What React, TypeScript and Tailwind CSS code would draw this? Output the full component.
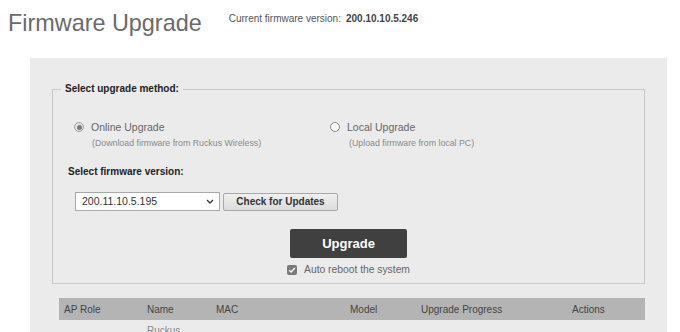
import React from 'react';

const columns = [
  { label: 'AP Role', w: 'w-[83px]' },
  { label: 'Name', w: 'w-[69px]' },
  { label: 'MAC', w: 'w-[134px]' },
  { label: 'Model', w: 'w-[71px]' },
  { label: 'Upgrade Progress', w: 'w-[151px]' },
  { label: 'Actions', w: 'flex-1' },
];

function Radio({ checked }: { checked?: boolean }) {
  if (checked) {
    return (
      <span className="flex h-[10px] w-[10px] items-center justify-center rounded-full border border-[#a0a0a0] bg-[#e4e4e4]">
        <span className="h-[5px] w-[5px] rounded-full bg-[#7a7a7a]" />
      </span>
    );
  }
  return <span className="h-[10px] w-[10px] rounded-full border border-[#8c8c8c] bg-white" />;
}

export default function App() {
  return (
    <div className="h-[332px] w-[680px] overflow-hidden bg-white font-['Liberation_Sans',Arial,sans-serif]">
      {/* title */}
      <div className="flex h-[58px] items-start pl-[8px]">
        <h1 className="mt-[9px] text-[23.4px] leading-[28px] text-[#6a6a6a]">Firmware Upgrade</h1>
        <div className="ml-[27px] mt-[12px] text-[10px] leading-[14px] text-[#555]">
          Current firmware version:
          <span className="ml-[5px] font-bold text-[#444]">200.10.10.5.246</span>
        </div>
      </div>

      <div className="ml-[30px] w-[637px] bg-[#ebebeb] px-[22px] pb-[20px] pt-[24px]">
        <fieldset className="border border-[#c8c8c8] px-0 pb-[6px]">
          <legend className="ml-[8px] px-[4px] text-[10px] font-bold leading-[14px] text-[#222]">
            Select upgrade method:
          </legend>

          <div className="mt-[24px] flex pl-[21px]">
            <div className="w-[256px]">
              <div className="flex items-center gap-[7px] text-[10.5px] leading-[14px] text-[#666]">
                <Radio checked />
                <span>Online Upgrade</span>
              </div>
              <div className="mt-[3px] pl-[18px] text-[8.8px] leading-[12px] text-[#8a8a8a]">
                (Download firmware from Ruckus Wireless)
              </div>
            </div>
            <div>
              <div className="flex items-center gap-[7px] text-[10.5px] leading-[14px] text-[#666]">
                <Radio />
                <span>Local Upgrade</span>
              </div>
              <div className="mt-[3px] pl-[19px] text-[8.8px] leading-[12px] text-[#8a8a8a]">
                (Upload firmware from local PC)
              </div>
            </div>
          </div>

          <div className="mt-[16px] pl-[15px] text-[10px] font-bold leading-[14px] text-[#222]">
            Select firmware version:
          </div>

          <div className="mt-[13px] flex items-center pl-[22px]">
            <div className="flex h-[19px] w-[145px] items-center justify-between border border-[#a9a9a9] bg-white pl-[6px] pr-[5px] text-[10.5px] text-[#333]">
              <span>200.11.10.5.195</span>
              <svg width="8" height="5" viewBox="0 0 8 5" fill="none">
                <path d="M1 1l3 3 3-3" stroke="#333" strokeWidth="1.3" />
              </svg>
            </div>
            <button className="ml-[3px] h-[18px] w-[115px] rounded-[2px] border border-[#a8a8a8] bg-gradient-to-b from-[#f0f0f0] to-[#dcdcdc] text-[10px] font-bold leading-none text-[#333]">
              Check for Updates
            </button>
          </div>

          <div className="mt-[18px] flex justify-center">
            <button className="h-[29px] w-[117px] rounded-[2px] bg-[#404040] text-[13px] font-bold text-white">
              Upgrade
            </button>
          </div>

          <div className="mt-[5px] flex items-center justify-center gap-[7px] text-[10.3px] leading-[14px] text-[#666]">
            <span className="flex h-[10px] w-[10px] items-center justify-center rounded-[2px] bg-[#7a7a7a]">
              <svg width="8" height="8" viewBox="0 0 8 8" fill="none">
                <path d="M1.2 4.2l1.9 1.9L6.8 2" stroke="#fff" strokeWidth="1.4" />
              </svg>
            </span>
            <span>Auto reboot the system</span>
          </div>
        </fieldset>

        <div className="ml-[7px] mt-[14px]">
          <div className="flex h-[22px] items-center bg-[#b4b4b4] pl-[5px] text-[10px] text-[#444]">
            {columns.map((c) => (
              <div key={c.label} className={c.w}>
                {c.label}
              </div>
            ))}
          </div>
          <div className="flex pl-[5px] pt-[4px] text-[10px] leading-[14px] text-[#888]">
            <div className="w-[83px]" />
            <div>Ruckus</div>
          </div>
        </div>
      </div>
    </div>
  );
}
